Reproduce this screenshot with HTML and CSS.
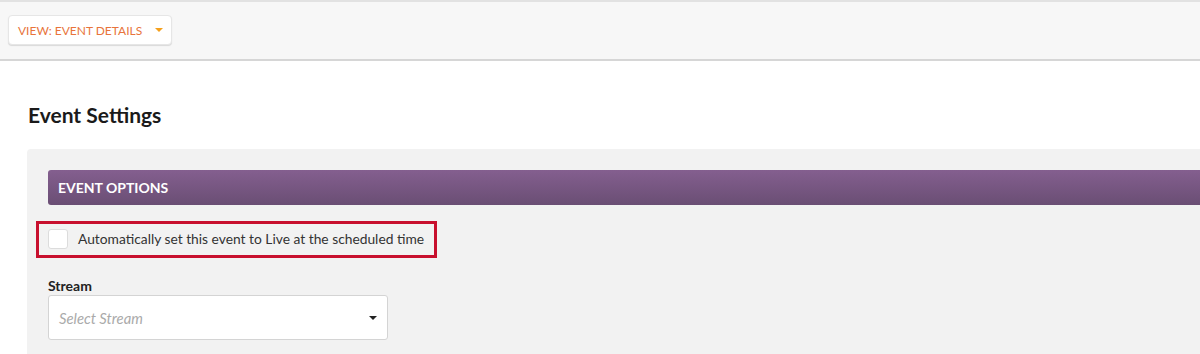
FILE: index.html
```html
<!DOCTYPE html>
<html>
<head>
<meta charset="utf-8">
<link rel="stylesheet" href="styles.css">
</head>
<body>
<div class="toolbar">
  <button class="view-btn">VIEW: EVENT DETAILS <span class="caret-orange"></span></button>
</div>
<main class="content">
  <h1 class="title">Event Settings</h1>
  <section class="panel">
    <div class="panel-header">EVENT OPTIONS</div>
    <div class="panel-body">
      <div class="highlight">
        <label class="check-row"><span class="checkbox"></span><span>Automatically set this event to Live at the scheduled time</span></label>
      </div>
      <div class="field">
        <div class="field-label">Stream</div>
        <div class="select"><span class="placeholder">Select Stream</span><span class="caret-dark"></span></div>
      </div>
    </div>
  </section>
</main>
</body>
</html>
```
FILE: styles.css
```css
* { box-sizing: border-box; }
html, body { margin: 0; padding: 0; }
body {
  font-family: Lato, "Open Sans", sans-serif;
  background: #fff;
  color: #333;
  width: 1200px;
  height: 354px;
  overflow: hidden;
}
.toolbar {
  height: 61px;
  background: #f7f7f7;
  border-top: 2px solid #e2e2e2;
  border-bottom: 2px solid #d6d6d6;
  padding: 13px 0 0 8px;
}
.view-btn {
  display: flex;
  align-items: center;
  height: 30px;
  width: 164px;
  padding: 0 0 0 9px;
  background: #fff;
  border: 1px solid #e6e6e6;
  border-radius: 4px;
  box-shadow: 0 1px 1px rgba(0,0,0,0.12);
  font-family: Lato, sans-serif;
  font-size: 12px;
  color: #e8743b;
  cursor: pointer;
}
.caret-orange {
  width: 0; height: 0;
  margin-left: 13px;
  border-left: 4px solid transparent;
  border-right: 4px solid transparent;
  border-top: 4px solid #f5a01c;
}
.content { padding: 0 0 0 27px; }
.title {
  margin: 0;
  padding: 41px 0 0 1px;
  height: 88px;
  font-size: 21px;
  font-weight: 700;
  color: #1a1a1a;
  line-height: 26px;
}
.panel {
  background: #f2f2f2;
  border-radius: 4px 0 0 0;
  padding: 21px 0 20px 21px;
}
.panel-header {
  height: 35px;
  background: linear-gradient(#845f8f, #6a4e74);
  border-radius: 3px 0 0 3px;
  color: #fff;
  font-weight: 700;
  font-size: 14px;
  line-height: 35px;
  padding-left: 10px;
}
.panel-body { padding-top: 16px; }
.highlight {
  display: inline-block;
  margin-left: -12px;
  border: 3px solid #c8102e;
  padding: 5px 10px 6px 9px;
}
.check-row {
  display: flex;
  align-items: center;
  font-size: 13.8px;
  line-height: 18px;
  color: #333;
}
.checkbox {
  width: 20px;
  height: 20px;
  background: #fff;
  border: 1px solid #dcdcdc;
  border-radius: 3px;
  margin-right: 10px;
}
.field { padding-top: 19px; }
.field-label {
  font-size: 14px;
  font-weight: 700;
  color: #222;
  line-height: 17px;
  margin-bottom: 1px;
}
.select {
  width: 340px;
  height: 45px;
  background: #fff;
  border: 1px solid #d4d4d4;
  border-radius: 3px;
  display: flex;
  align-items: center;
  justify-content: space-between;
  padding: 0 10px 0 10px;
}
.placeholder {
  font-style: italic;
  font-size: 14.8px;
  color: #aaa;
}
.caret-dark {
  width: 0; height: 0;
  border-left: 4px solid transparent;
  border-right: 4px solid transparent;
  border-top: 4px solid #222;
}
```
